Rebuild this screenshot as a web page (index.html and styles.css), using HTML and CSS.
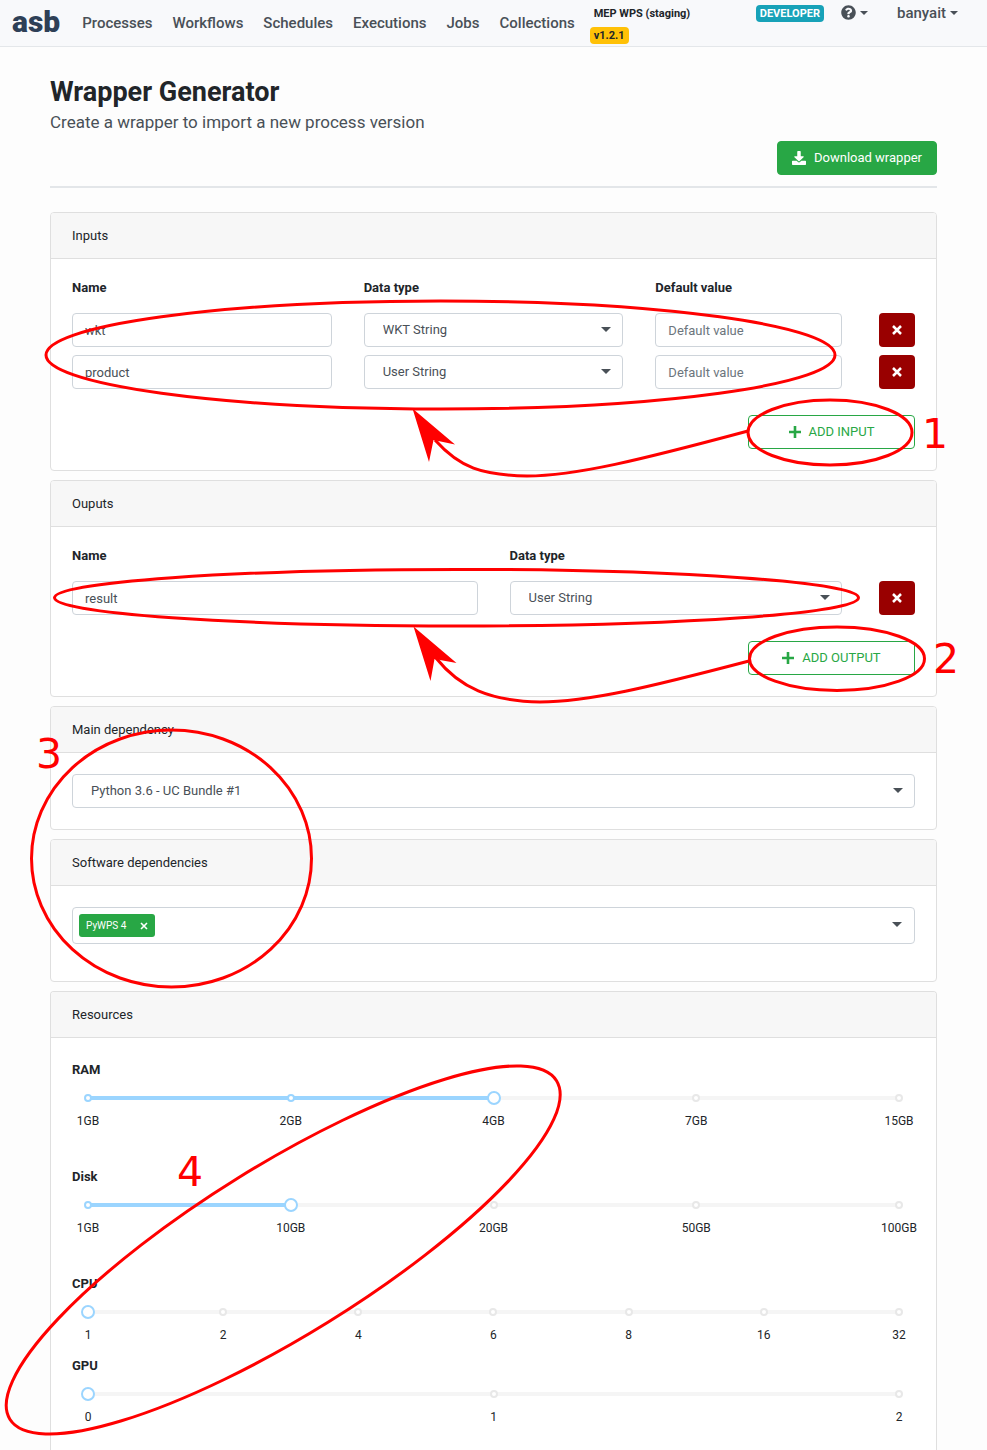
FILE: index.html
```html
<!DOCTYPE html>
<html lang="en">
<head>
<meta charset="utf-8">
<title>Wrapper Generator</title>
<link rel="stylesheet" href="styles.css">
</head>
<body>
<header class="navbar">
  <a class="brand" href="#">asb</a>
  <nav class="menu">
    <a href="#">Processes</a>
    <a href="#">Workflows</a>
    <a href="#">Schedules</a>
    <a href="#">Executions</a>
    <a href="#">Jobs</a>
    <a href="#">Collections</a>
  </nav>
  <div class="env">
    <span class="env-name">MEP WPS (staging)</span>
    <span class="badge badge-warning">v1.2.1</span>
  </div>
  <div class="account">
    <span class="badge badge-info">DEVELOPER</span>
    <button class="nav-button" type="button" aria-label="Help">
      <svg width="15" height="15" viewBox="0 0 512 512" aria-hidden="true"><path fill="currentColor" d="M504 256c0 137-111 248-248 248S8 393 8 256 119 8 256 8s248 111 248 248zM262.700 90c-54.500 0-89.300 23-116.500 63.800-3.500 5.300-2.400 12.400 2.700 16.300l34.700 26.300c5.200 3.900 12.600 3 16.700-2.100 17.900-22.700 30.100-35.800 57.300-35.800 20.400 0 45.700 13.100 45.700 33 0 15-12.400 22.700-32.500 34C247.100 238.500 216 254.900 216 296v4c0 6.600 5.400 12 12 12h56c6.600 0 12-5.400 12-12v-1.300c0-28.500 83.200-29.600 83.200-106.700 0-58-60.200-102-116.500-102zM256 338c-25.400 0-46 20.600-46 46s20.600 46 46 46 46-20.600 46-46-20.600-46-46-46z"/></svg>
      <span class="caret"></span>
    </button>
    <button class="nav-button user" type="button">banyait <span class="caret"></span></button>
  </div>
</header>

<main class="page">
  <div class="heading">
    <h1>Wrapper Generator</h1>
    <p>Create a wrapper to import a new process version</p>
    <button class="btn btn-success" type="button">
      <svg width="14" height="14" viewBox="0 0 512 512" aria-hidden="true"><path fill="currentColor" d="M216 0h80c13.300 0 24 10.700 24 24v168h87.700c17.800 0 26.700 21.500 14.100 34.100L269.700 378.300c-7.500 7.500-19.800 7.500-27.300 0L90.100 226.100c-12.600-12.600-3.700-34.100 14.100-34.100H192V24c0-13.300 10.700-24 24-24zm296 376v112c0 13.300-10.700 24-24 24H24c-13.300 0-24-10.700-24-24V376c0-13.300 10.700-24 24-24h146.700l49 49c20.100 20.100 52.500 20.100 72.600 0l49-49H488c13.300 0 24 10.700 24 24z"/></svg>
      Download wrapper
    </button>
  </div>

  <section class="card">
    <h2>Inputs</h2>
    <div class="card-body">
      <table class="fields">
        <colgroup><col class="col-third"><col class="col-third"><col><col class="col-action"></colgroup>
        <thead><tr><th>Name</th><th>Data type</th><th>Default value</th><td></td></tr></thead>
        <tbody>
          <tr>
            <td><input class="control" type="text" value="wkt" aria-label="Name"></td>
            <td><div class="select"><select class="control" aria-label="Data type"><option>WKT String</option></select></div></td>
            <td><input class="control" type="text" placeholder="Default value" aria-label="Default value"></td>
            <td><button class="btn-remove" type="button" aria-label="Remove wkt"><svg width="10" height="10" viewBox="0 0 10 10" aria-hidden="true"><path d="M1 1l8 8M9 1l-8 8"/></svg></button></td>
          </tr>
          <tr>
            <td><input class="control" type="text" value="product" aria-label="Name"></td>
            <td><div class="select"><select class="control" aria-label="Data type"><option>User String</option></select></div></td>
            <td><input class="control" type="text" placeholder="Default value" aria-label="Default value"></td>
            <td><button class="btn-remove" type="button" aria-label="Remove product"><svg width="10" height="10" viewBox="0 0 10 10" aria-hidden="true"><path d="M1 1l8 8M9 1l-8 8"/></svg></button></td>
          </tr>
        </tbody>
      </table>
      <button class="btn btn-add" type="button"><svg width="12" height="12" viewBox="0 0 12 12" aria-hidden="true"><path d="M6 0v12M0 6h12"/></svg>ADD INPUT</button>
    </div>
  </section>

  <section class="card">
    <h2>Ouputs</h2>
    <div class="card-body">
      <table class="fields">
        <colgroup><col class="col-half"><col><col class="col-action"></colgroup>
        <thead><tr><th>Name</th><th>Data type</th><td></td></tr></thead>
        <tbody>
          <tr>
            <td><input class="control" type="text" value="result" aria-label="Name"></td>
            <td><div class="select"><select class="control" aria-label="Data type"><option>User String</option></select></div></td>
            <td><button class="btn-remove" type="button" aria-label="Remove result"><svg width="10" height="10" viewBox="0 0 10 10" aria-hidden="true"><path d="M1 1l8 8M9 1l-8 8"/></svg></button></td>
          </tr>
        </tbody>
      </table>
      <button class="btn btn-add" type="button"><svg width="12" height="12" viewBox="0 0 12 12" aria-hidden="true"><path d="M6 0v12M0 6h12"/></svg>ADD OUTPUT</button>
    </div>
  </section>

  <section class="card">
    <h2 id="main-dependency">Main dependency</h2>
    <div class="card-body">
      <div class="select"><select class="control" aria-labelledby="main-dependency"><option>Python 3.6 - UC Bundle #1</option></select></div>
    </div>
  </section>

  <section class="card">
    <h2>Software dependencies</h2>
    <div class="card-body software">
      <div class="select tags">
        <span class="tag">PyWPS 4
          <button type="button" aria-label="Remove PyWPS 4"><svg width="8" height="8" viewBox="0 0 8 8" aria-hidden="true"><path d="M1 1l6 6M7 1l-6 6"/></svg></button>
        </span>
      </div>
    </div>
  </section>

  <section class="card card-last">
    <h2>Resources</h2>
    <div class="card-body resources">
      <div class="resource">
        <label for="ram">RAM</label>
        <div class="slider">
          <div class="rail"><div class="fill" style="width: 50%"></div></div>
          <div class="dots"><i class="on"></i><i class="on"></i><i class="on"></i><i></i><i></i></div>
          <input id="ram" type="range" min="0" max="4" value="2">
        </div>
        <div class="marks"><span>1GB</span><span>2GB</span><span>4GB</span><span>7GB</span><span>15GB</span></div>
      </div>
      <div class="resource">
        <label for="disk">Disk</label>
        <div class="slider">
          <div class="rail"><div class="fill" style="width: 25%"></div></div>
          <div class="dots"><i class="on"></i><i class="on"></i><i></i><i></i><i></i></div>
          <input id="disk" type="range" min="0" max="4" value="1">
        </div>
        <div class="marks"><span>1GB</span><span>10GB</span><span>20GB</span><span>50GB</span><span>100GB</span></div>
      </div>
      <div class="resource compact">
        <label for="cpu">CPU</label>
        <div class="slider">
          <div class="rail"></div>
          <div class="dots"><i class="on"></i><i></i><i></i><i></i><i></i><i></i><i></i></div>
          <input id="cpu" type="range" min="0" max="6" value="0">
        </div>
        <div class="marks"><span>1</span><span>2</span><span>4</span><span>6</span><span>8</span><span>16</span><span>32</span></div>
      </div>
      <div class="resource">
        <label for="gpu">GPU</label>
        <div class="slider">
          <div class="rail"></div>
          <div class="dots"><i class="on"></i><i></i><i></i></div>
          <input id="gpu" type="range" min="0" max="2" value="0">
        </div>
        <div class="marks"><span>0</span><span>1</span><span>2</span></div>
      </div>
    </div>
  </section>
</main>

<svg class="annotations" width="987" height="1450" viewBox="0 0 987 1450">
  <g class="strokes">
    <ellipse cx="440.500" cy="355" rx="394.500" ry="54"/>
    <ellipse cx="830" cy="432.500" rx="82" ry="32.500"/>
    <path d="M748 431C640 460 575 476 527 476C482 475 460 468 435 440"/>
    <ellipse cx="456.500" cy="597.700" rx="402" ry="28.300"/>
    <ellipse cx="837" cy="658.700" rx="87.500" ry="31.700"/>
    <path d="M749 661C650 687 588 702 540 702C490 701 460 688 436 658"/>
    <ellipse cx="171.500" cy="858.500" rx="140" ry="128.500"/>
    <ellipse cx="283.200" cy="1250" rx="321.500" ry="85" transform="rotate(-31.770 283.200 1250)"/>
  </g>
  <g class="heads">
    <path d="M412.500 408.500L455 444.500L433.500 440L429 462Z"/>
    <path d="M413.500 626.500L456.500 663L434.500 659L430.500 681Z"/>
    <text x="922" y="448">1</text>
    <text x="933" y="673">2</text>
    <text x="36" y="768">3</text>
    <text x="177" y="1186">4</text>
  </g>
</svg>
</body>
</html>
```
FILE: styles.css
```css
* {
  box-sizing: border-box;
}

body {
  margin: 0;
  min-height: 100vh;
  position: relative;
  display: flex;
  flex-direction: column;
  background: #fdfdfd;
  color: #212529;
  font-family: Roboto, "Liberation Sans", sans-serif;
  font-size: 13px;
  line-height: 16px;
}

button,
input,
select {
  font: inherit;
  color: inherit;
}

button {
  cursor: pointer;
}

h1,
h2,
p {
  margin: 0;
}

/* Top bar */
.navbar {
  display: flex;
  align-items: flex-start;
  height: 47px;
  padding: 0 29px 0 12px;
  background: #f8f9fb;
  border-bottom: 1px solid #e4e7ea;
}

.brand {
  color: #2e4057;
  font-size: 30px;
  font-weight: 900;
  line-height: 44px;
  text-decoration: none;
}

.menu {
  display: flex;
  gap: 20px;
  margin-left: 22px;
}

.menu a {
  color: #495057;
  font-size: 15px;
  font-weight: 500;
  line-height: 46px;
  text-decoration: none;
}

.env {
  display: flex;
  flex-direction: column;
  align-items: flex-start;
  gap: 5px;
  margin-left: 15px;
  padding-top: 5px;
}

.env-name {
  padding: 0 4px;
  font-size: 11px;
  font-weight: 700;
  line-height: 17px;
}

.badge {
  padding: 0 4px;
  border-radius: 4px;
  font-size: 11px;
  font-weight: 700;
  line-height: 17px;
}

.badge-warning {
  background: #ffc107;
}

.badge-info {
  background: #17a2b8;
  color: #fff;
}

.account {
  display: flex;
  align-items: flex-start;
  margin-left: auto;
  padding-top: 5px;
}

.nav-button {
  display: flex;
  align-items: center;
  gap: 4px;
  height: 15px;
  margin-left: 17px;
  padding: 0;
  border: 0;
  background: none;
  color: #495057;
  font-size: 15px;
  font-weight: 500;
}

.user {
  margin-left: 29px;
}

.caret {
  border: 4px solid transparent;
  border-top-color: currentColor;
  border-bottom: 0;
}

/* Page heading */
.page {
  flex: 1;
  display: flex;
  flex-direction: column;
  gap: 9px;
  padding: 29px 50px 0;
}

.heading {
  display: flex;
  flex-direction: column;
  margin-bottom: 15px;
  padding-bottom: 11px;
  border-bottom: 2px solid #e3e6e9;
}

h1 {
  font-size: 27px;
  font-weight: 700;
  line-height: 32px;
}

.heading p {
  color: #495057;
  font-size: 17px;
  line-height: 28px;
}

.btn {
  display: flex;
  align-items: center;
  justify-content: center;
  height: 34px;
  border: 1px solid #28a745;
  border-radius: 4px;
}

.btn-success {
  align-self: flex-end;
  gap: 8px;
  margin-top: 5px;
  padding: 0 14px;
  background: #28a745;
  color: #fff;
}

/* Cards */
.card {
  background: #fff;
  border: 1px solid #dfdfdf;
  border-radius: 4px;
}

.card h2 {
  padding: 15px 21px 14px;
  background: #f7f7f7;
  border-bottom: 1px solid #dfdfdf;
  border-radius: 3px 3px 0 0;
  font-size: 13px;
  font-weight: 400;
  line-height: 16px;
}

.card-body {
  padding: 21px;
}

.card-last {
  flex: 1;
  border-bottom: 0;
  border-radius: 4px 4px 0 0;
}

/* Field tables */
.fields {
  width: 100%;
  table-layout: fixed;
  border-collapse: collapse;
}

.col-third {
  width: 34.6%;
}

.col-half {
  width: 51.9%;
}

.col-action {
  width: 73px;
}

.fields th {
  padding: 0 0 17px;
  font-weight: 700;
  text-align: left;
}

.fields tbody td {
  padding: 0 32px 8px 0;
}

.fields tbody td:nth-last-child(2) {
  padding-right: 0;
}

.fields tbody td:last-child {
  padding: 0 0 8px 37px;
}

.control {
  display: block;
  width: 100%;
  height: 34px;
  padding: 0 12px;
  background: #fff;
  border: 1px solid #ced4da;
  border-radius: 4px;
  color: #495057;
}

.control::placeholder {
  color: #6c757d;
}

.select {
  position: relative;
}

.select select {
  appearance: none;
  padding: 0 30px 0 18px;
}

.select::after {
  content: "";
  position: absolute;
  top: 14px;
  right: 12px;
  border: 5px solid transparent;
  border-top-color: #495057;
  border-bottom: 0;
  pointer-events: none;
}

.btn-remove {
  display: flex;
  align-items: center;
  justify-content: center;
  width: 100%;
  height: 34px;
  padding: 0;
  border: 0;
  border-radius: 4px;
  background: #900;
}

.btn-remove path {
  stroke: #fff;
  stroke-width: 2.5;
}

.btn-add {
  gap: 8px;
  width: 167px;
  margin: 18px 0 0 auto;
  padding: 0;
  background: #fff;
  color: #28a745;
}

.btn-add path {
  stroke: #28a745;
  stroke-width: 2.6;
}

.software {
  padding-bottom: 37px;
}

.tags {
  display: flex;
  height: 37px;
  padding: 6px;
  border: 1px solid #ced4da;
  border-radius: 4px;
}

.tag {
  display: flex;
  align-items: center;
  gap: 14px;
  height: 23px;
  padding: 0 7px;
  border-radius: 3px;
  background: #28a745;
  color: #fff;
  font-size: 10px;
}

.tag button {
  display: flex;
  padding: 0;
  border: 0;
  background: none;
}

.tag path {
  stroke: #fff;
  stroke-width: 1.6;
}

/* Resource sliders */
.resources {
  padding-top: 24px;
}

.resource {
  margin-bottom: 40px;
}

.compact {
  margin-bottom: 15px;
}

.resource label {
  display: block;
  margin-bottom: 13px;
  font-weight: 700;
}

.slider {
  position: relative;
  display: flex;
  align-items: center;
  height: 14px;
  margin: 0 16px;
}

.rail {
  width: 100%;
  height: 4px;
  border-radius: 2px;
  background: #f5f5f5;
}

.fill {
  height: 4px;
  border-radius: 2px;
  background: #9bd5ff;
}

.dots {
  position: absolute;
  inset: 3px 0;
  display: flex;
  justify-content: space-between;
}

.dots i {
  width: 8px;
  height: 8px;
  margin: 0 -4px;
  border: 2px solid #e8e8e8;
  border-radius: 50%;
  background: #fff;
}

.dots .on {
  border-color: #9bd5ff;
}

.slider input {
  position: absolute;
  inset: 0 -7px;
  width: calc(100% + 14px);
  height: 14px;
  margin: 0;
  appearance: none;
  background: none;
}

.slider input::-webkit-slider-thumb {
  appearance: none;
  width: 14px;
  height: 14px;
  border: 2px solid #9bd5ff;
  border-radius: 50%;
  background: #fff;
}

.marks {
  display: flex;
  justify-content: space-between;
  margin: 8px 16px 0;
  font-size: 12px;
}

.marks span {
  display: flex;
  justify-content: center;
  width: 0;
}

/* Hand-drawn callouts over the form */
.annotations {
  position: absolute;
  top: 0;
  left: 0;
  pointer-events: none;
}

.strokes {
  fill: none;
  stroke: #f00;
  stroke-width: 3;
}

.heads {
  fill: #f00;
  font-family: "DejaVu Sans", sans-serif;
  font-size: 41px;
}
```
